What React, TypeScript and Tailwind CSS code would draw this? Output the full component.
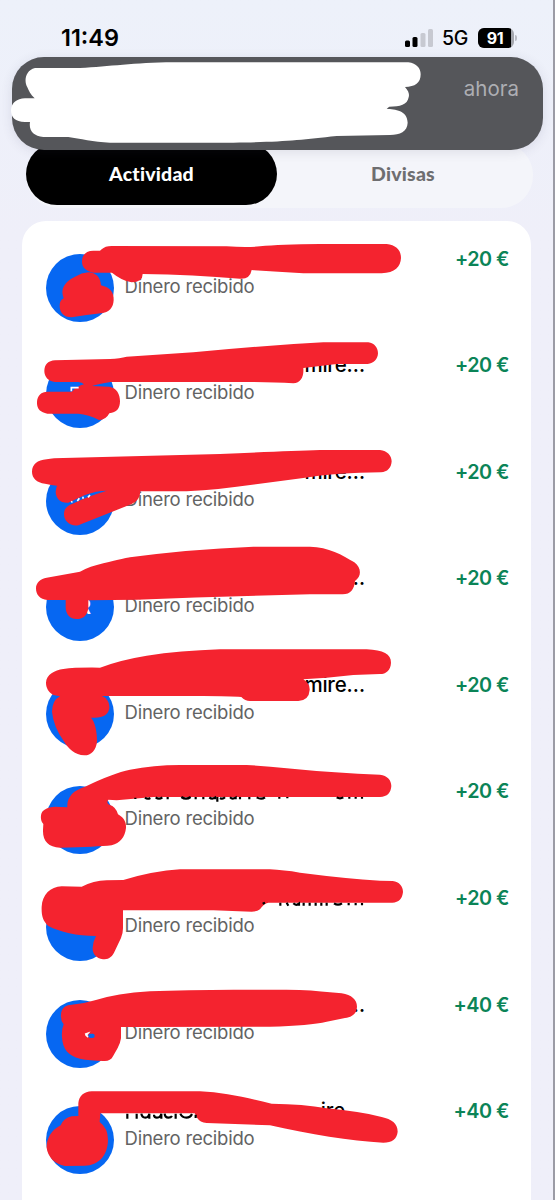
interface Movement { amount: string; tail?: string; tailClass?: string; initial?: string; }

const movements: Movement[] = [
  { amount: "+20 €" },
  { amount: "+20 €", tail: "mire…" },
  { amount: "+20 €", tail: "mire…" },
  { amount: "+20 €", tail: "…", initial: "R" },
  { amount: "+20 €", tail: "mire…" },
  { amount: "+20 €" },
  { amount: "+20 €" },
  { amount: "+40 €", tail: "…" },
  { amount: "+40 €", tail: "ire", tailClass: "pr-[20px]" },
];

// marker strokes, one group per movement, drawn at 3x
const strokes = [
  {
    y: 220,
    red: [
      "M245 88 Q255 78 275 78 L620 79 Q680 83 720 79 Q780 73 900 72 H1100 C1128 75 1143 90 1143 114 C1142 140 1125 158 1085 160 H850 Q770 155 695 150 Q690 178 660 176 Q520 164 368 162 Q368 187 335 187 Q305 182 276 158 H220 C198 153 186 142 186 125 C186 103 200 92 220 92 H240 Z",
      "M205 157 C228 158 242 172 243 196 C270 202 282 218 281 240 C280 263 268 277 243 280 Q200 284 155 292 C130 292 118 276 119 255 Q119 241 131 235 Q123 214 132 198 Q140 182 165 170 Q185 158 205 157 Z",
    ],
    dark: "",
    light: "",
  },
  {
    y: 330,
    red: [
      "M105 91 L270 87 Q300 85 320 80 L520 67 Q720 47 910 37 H1045 C1063 40 1074 52 1074 70 C1073 88 1062 100 1043 102 H950 L850 114 C852 142 842 158 820 160 Q760 156 680 156 H272 Q235 162 216 168 L268 170 C290 174 300 192 300 214 C300 236 290 248 268 250 Q258 270 237 270 Q205 253 175 251 H82 C61 248 50 236 51 216 C52 196 64 185 82 185 H155 Q172 168 192 163 Q186 157 175 156 H105 C85 154 73 140 73 123 C73 104 85 92 105 91 Z",
    ],
    dark: "",
    light: "M154 184 V173 H176",
  },
  {
    y: 440,
    red: [
      "M80 58 Q100 54 130 54 L600 42 Q800 33 900 30 H1080 C1102 33 1115 46 1115 64 C1114 84 1102 96 1083 97 Q950 98 850 114 L650 140 Q550 154 450 154 H361 C360 173 352 184 335 192 L175 256 C150 260 132 243 132 223 C132 205 142 196 158 191 Q200 170 260 152 Q230 152 195 165 L145 188 C122 190 107 175 107 155 Q108 144 111 137 Q95 135 75 131 C50 128 36 114 36 95 C36 74 52 60 80 58 Z",
    ],
    dark: "",
    light: "M154 187 L157 184 M172 183 L178 175 M189 176 V170 M204 172 L210 165",
  },
  {
    y: 535,
    red: [
      "M80 128 L180 110 Q210 94 250 85 Q320 68 330 67 Q500 43 700 35 H870 C925 36 968 60 1003 82 C1025 99 1025 124 1005 138 C1003 162 992 178 968 178 H870 Q600 184 350 194 L205 196 V218 C203 240 190 252 170 252 C150 252 138 238 137 218 V195 H82 C60 193 48 180 48 160 C48 143 62 130 80 128 Z",
    ],
    dark: "",
    light: "",
  },
  {
    y: 640,
    red: [
      "M130 87 Q165 82 240 83 Q300 60 380 47 Q480 32 600 28 H1040 C1090 30 1113 42 1113 68 C1112 91 1098 102 1080 102 Q1000 102 920 113 L850 118 Q870 130 869 150 Q867 181 835 183 H690 Q675 183 664 171 Q630 168 550 168 H245 C262 174 269 188 268 205 C265 225 248 236 213 233 C225 245 231 275 231 305 C228 330 214 346 193 346 C165 345 145 325 133 306 Q100 260 96 215 Q97 180 120 169 L100 165 C84 155 78 142 78 128 C79 104 104 90 130 87 Z",
    ],
    dark: "",
    light: "",
  },
  {
    y: 755,
    red: [
      "M142 157 C140 126 160 106 195 95 Q280 54 330 44 Q400 30 480 30 H680 Q740 33 800 40 Q950 55 1080 59 C1102 62 1114 75 1114 93 C1113 113 1102 125 1080 126 H400 L290 136 L265 134 Q258 144 268 149 Q288 155 294 178 C311 188 319 200 318 219 C315 247 300 264 275 271 Q230 276 120 278 C85 276 68 258 69 225 L70 207 C60 197 61 177 68 169 Q77 157 105 155 Z",
    ],
    dark: "M346 128 v4 M375 128 q8 6 16 1 M407 127 q10 8 20 0 M443 126 v7 M484 126 q14 10 28 0 M527 126 v7 M550 126 v7 M568 127 q8 7 17 1 v5 M592 126 v14 M600 129 q8 5 15 -2 M630 127 q7 7 17 1 v5 M660 126 v7 M688 126 v7 M710 127 q14 8 25 0 M778 126 v5 M802 126 v4 M950 127 q10 6 20 0 M988 126 v5 M1007 126 v5 M1026 126 v5",
    light: "",
  },
  {
    y: 860,
    red: [
      "M125 79 L185 80 Q220 62 260 61 L310 60 Q400 33 480 28 H750 Q790 30 840 38 Q980 56 1080 62 L1118 63 C1138 66 1149 78 1149 96 C1147 116 1137 127 1117 128 H745 Q730 131 720 148 Q711 155 695 155 L580 151 H309 V205 Q309 220 303 234 L282 278 C274 293 263 298 249 298 C227 294 217 280 218 263 Q219 245 228 228 C170 228 120 216 85 198 C68 182 64 165 65 140 C67 104 91 80 125 79 Z",
    ],
    dark: "M728 131 l7 -3 M781 128 v9 M800 128 l5 9 M820 130 q8 8 17 1 v6 M851 128 v9 M869 128 v9 M887 128 v9 M904 128 v9 M920 128 v9 M942 130 q12 8 24 0 M986 129 v7 M1007 129 v7 M1026 129 v7",
    light: "",
  },
  {
    y: 980,
    red: [
      "M150 75 Q190 72 225 61 Q290 40 390 34 Q500 29 640 29 H800 Q880 30 930 37 L965 40 C995 45 1011 59 1011 80 C1010 99 1000 110 975 114 L920 125 Q870 137 750 140 L303 141 V175 Q301 190 293 204 L279 229 C273 240 265 244 250 243 Q210 242 180 236 C145 228 128 208 126 172 Q124 150 131 133 Q121 122 123 103 C124 87 133 77 150 75 Z",
    ],
    dark: "",
    light: "M195 163 L204 160 L199 166 L205 171",
  },
  {
    y: 1080,
    red: [
      "M175 108 V70 C177 48 192 35 215 34 H540 C610 37 680 53 755 71 Q850 72 920 85 Q1020 94 1085 111 C1115 117 1133 131 1133 155 C1131 177 1116 188 1090 188 C990 184 870 162 750 136 L560 129 Q540 127 531 113 L524 100 H241 L239 126 Q264 144 264 180 C263 228 235 256 195 257 L135 258 C103 252 84 231 80 204 C79 177 94 150 122 136 Q130 115 155 109 Z",
    ],
    dark: "M322 101 v15 M350 101 v15 M364 101 q2 12 12 12 q10 0 12 -12 v15 M402 104 q0 9 9 9 q11 0 13 -12 v15 M434 101 q1 12 11 12 q8 0 11 -5 M467 101 v15 M481 101 q5 12 18 12 q12 0 17 -11 M527 104 v10",
    light: "",
  },
];

function StatusBar() {
  return (
    <div className="flex h-[57px] shrink-0 items-start justify-between pl-[60px] pr-[36px] pt-[24px]">
      <span className="pl-px text-[23.5px] font-semibold leading-[28px]">11:49</span>
      <div className="flex items-center">
        <svg className="mr-[9px] h-[18px] w-[28px]" viewBox="0 0 28 18">
          <rect x="0" y="11.5" width="5" height="6.5" rx="1.5" />
          <rect x="7.5" y="8" width="5" height="10" rx="1.5" />
          <rect x="15.5" y="4" width="5" height="14" rx="1.5" fill="#c7c9d1" />
          <rect x="23" y="0" width="5" height="18" rx="1.5" fill="#c7c9d1" />
        </svg>
        <span className="w-[27px] pt-px text-[19.5px] font-medium leading-[26px] tracking-[-0.3px]">5G</span>
        <div className="relative ml-[9px] flex h-[20px] w-[36px] items-center overflow-hidden rounded-[6px] bg-[#a4a6ad]">
          <span className="h-full w-[33px] bg-black pl-[1px] text-center text-[16px] font-bold leading-[20px] tracking-[-0.3px] text-white">91</span>
        </div>
        <span className="ml-[1px] h-[6px] w-[2px] rounded-r-full bg-[#b9bbc3]" />
      </div>
    </div>
  );
}

function MovementRow({ amount, tail, tailClass = "", initial }: Movement) {
  return (
    <div className="flex h-[106.6px] pl-[24px] pr-[22px]">
      <div className="mt-[19px] flex h-[68px] w-[68px] shrink-0 items-center justify-center rounded-full bg-[#0667f2] pl-[9px] text-[20px] font-semibold text-white">
        {initial}
      </div>
      <div className="ml-[10px] w-[241px] pt-[11px]">
        <div className={`h-[26px] text-right text-[20.5px] font-medium leading-[26px] tracking-[-0.2px] ${tailClass}`}>{tail}</div>
        <div className="mt-px pl-[0.5px] text-[18.5px] leading-[26px] tracking-[-0.22px] text-[#636363]">Dinero recibido</div>
      </div>
      <div className="ml-auto whitespace-nowrap pt-[11px] text-[19.8px] font-semibold leading-[26px] tracking-[-0.5px] text-[#0b8457]">{amount}</div>
    </div>
  );
}

export default function App() {
  return (
    <div className="relative flex h-[1200px] w-[555px] flex-col overflow-hidden border-r-2 border-[#9b9ba5] bg-linear-to-b from-[#edf1fa] to-[#efeff9] to-20% font-['Inter',sans-serif] text-black">
      <StatusBar />

      <div className="relative z-10 ml-[12px] flex h-[93px] w-[531px] shrink-0 justify-end rounded-[32px] bg-[#55565a] pr-[24px] pt-[18px] shadow-[0_2px_12px_rgba(60,60,90,0.12)]">
        <span className="text-[20.5px] leading-[28px] text-[#adaeb3]">ahora</span>
      </div>

      <div className="-mt-[7px] ml-[26px] flex h-[65px] w-[507px] shrink-0 rounded-[32px] bg-[#f4f5fa] font-['Lato',sans-serif] text-[19.5px] font-black tracking-[0.2px]">
        <div className="flex h-[62px] w-[251px] items-center justify-center rounded-[31px] bg-black text-white">Actividad</div>
        <div className="flex h-[62px] flex-1 items-center justify-center pr-[4px] text-[#6e6e70]">Divisas</div>
      </div>

      <div className="ml-[22px] mt-[13px] h-[1000px] w-[509px] shrink-0 rounded-t-[24px] bg-white pt-[13.5px]">
        {movements.map((m, i) => <MovementRow key={i} {...m} />)}
      </div>

      <svg className="pointer-events-none absolute left-0 top-0 z-20" width="555" height="1200" viewBox="0 0 555 1200">
        <path
          transform="scale(0.33333)"
          fill="#fff"
          d="M105 204 L240 204 C330 200 400 188 520 187 L1225 187 C1250 190 1262 205 1262 223 C1262 250 1245 260 1215 261 C1228 275 1228 285 1226 292 C1222 315 1200 320 1168 320 L1160 326 C1185 328 1222 330 1223 368 C1222 395 1200 404 1170 405 L1010 408 C900 420 850 426 700 428 L330 428 C280 426 240 416 205 411 L130 411 C100 408 86 392 90 366 L75 366 C45 365 33 352 33 330 C35 308 50 296 75 295 L104 295 C92 285 85 270 82 262 C72 245 74 212 105 204 Z"
        />
        {strokes.map(s => (
          <g key={s.y} transform={`translate(20 ${s.y}) scale(0.33333)`}>
            {s.red.map(d => <path key={d} d={d} fill="#f4232f" />)}
            {s.dark && <path d={s.dark} fill="none" stroke="#000" strokeWidth="6.5" />}
            {s.light && <path d={s.light} fill="none" stroke="#fff" strokeWidth="5" />}
            {s.y === 980 && <rect x="205" y="161" width="19" height="13" rx="6" fill="#0667f2" />}
          </g>
        ))}
      </svg>
    </div>
  );
}
